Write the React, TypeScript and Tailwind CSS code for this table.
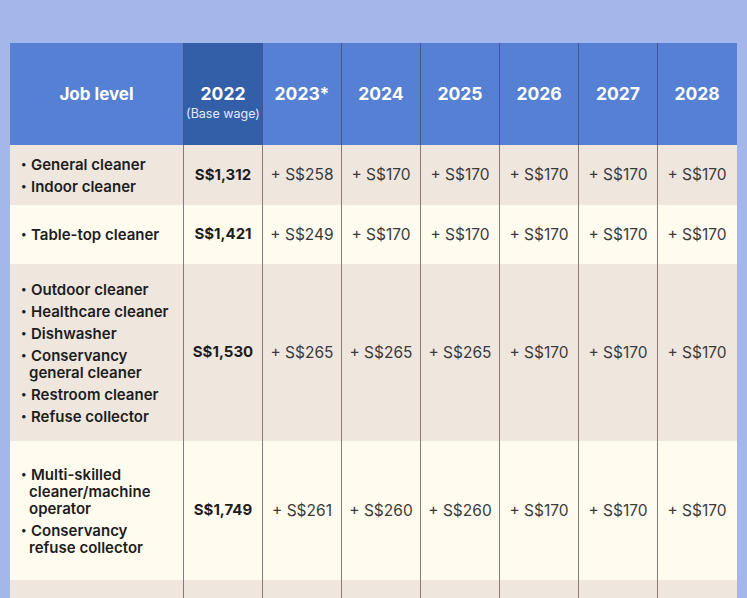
import React from "react";

const years = ["2023*", "2024", "2025", "2026", "2027", "2028"];

type Row = {
  jobs: string[][];
  base: string;
  raises: string[];
  height: string;
  bg: string;
};

const rows: Row[] = [
  {
    jobs: [["General cleaner"], ["Indoor cleaner"]],
    base: "S$1,312",
    raises: ["+ S$258", "+ S$170", "+ S$170", "+ S$170", "+ S$170", "+ S$170"],
    height: "h-[60px]",
    bg: "bg-[#efe6de]",
  },
  {
    jobs: [["Table-top cleaner"]],
    base: "S$1,421",
    raises: ["+ S$249", "+ S$170", "+ S$170", "+ S$170", "+ S$170", "+ S$170"],
    height: "h-[59px]",
    bg: "bg-[#fffbef]",
  },
  {
    jobs: [
      ["Outdoor cleaner"],
      ["Healthcare cleaner"],
      ["Dishwasher"],
      ["Conservancy", "general cleaner"],
      ["Restroom cleaner"],
      ["Refuse collector"],
    ],
    base: "S$1,530",
    raises: ["+ S$265", "+ S$265", "+ S$265", "+ S$170", "+ S$170", "+ S$170"],
    height: "h-[177px]",
    bg: "bg-[#efe6de]",
  },
  {
    jobs: [
      ["Multi-skilled", "cleaner/machine", "operator"],
      ["Conservancy", "refuse collector"],
    ],
    base: "S$1,749",
    raises: ["+ S$261", "+ S$260", "+ S$260", "+ S$170", "+ S$170", "+ S$170"],
    height: "h-[139px]",
    bg: "bg-[#fffbef]",
  },
];

const JobList = ({ jobs }: { jobs: string[][] }) => (
  <div className="flex flex-col gap-[5px] pl-[11px]">
    {jobs.map((lines, i) => (
      <div key={i} className="flex">
        <span className="w-[10px] shrink-0 text-[11px] leading-[17px]">•</span>
        {/* wrapped lines sit 2px left of the first one */}
        <p className="-ml-[2px] indent-[2px] leading-[17px]">
          {lines.map((l, j) => (
            <React.Fragment key={j}>
              {j > 0 && <br />}
              {l}
            </React.Fragment>
          ))}
        </p>
      </div>
    ))}
  </div>
);

export default function App() {
  return (
    <div
      className="h-[598px] w-[747px] overflow-hidden bg-[#a3b7ea] pt-[43px] pl-[10px]"
      style={{ fontFamily: "Inter, 'Noto Sans', sans-serif" }}
    >
      <div className="w-[727px]">
        {/* header */}
        <div className="grid h-[102px] grid-cols-[173px_repeat(7,79px)] bg-[#5680d3] text-white">
          <div className="flex justify-center pt-[39px] text-[17px] font-bold leading-[24px]">
            Job level
          </div>
          <div className="flex flex-col items-center border-l border-[#44568c] bg-[#335fa9] pt-[39px]">
            <span className="text-[17.5px] font-bold leading-[24px]">2022</span>
            <span className="text-[12.5px] leading-[16px] text-[#e4ebfa]">(Base wage)</span>
          </div>
          {years.map((y) => (
            <div
              key={y}
              className="flex justify-center border-l border-[#44568c] pt-[39px] text-[17.5px] font-bold leading-[24px]"
            >
              {y}
            </div>
          ))}
        </div>

        {rows.map((r, i) => (
          <div
            key={i}
            className={`grid grid-cols-[173px_repeat(7,79px)] ${r.height} ${r.bg}`}
          >
            <div className="flex items-center text-[15px] font-semibold text-[#1d1d1f]">
              <JobList jobs={r.jobs} />
            </div>
            <div className="flex items-center justify-center border-l border-[#867b79] text-[15px] font-bold text-[#1d1d1f]">
              {r.base}
            </div>
            {r.raises.map((v, k) => (
              <div
                key={k}
                className="flex items-center justify-center border-l border-[#867b79] text-[15.5px] text-[#3a3a3c]"
              >
                {v}
              </div>
            ))}
          </div>
        ))}

        <div className="grid h-[60px] grid-cols-[173px_repeat(7,79px)] bg-[#efe6de]">
          <div />
          {Array.from({ length: 7 }).map((_, k) => (
            <div key={k} className="border-l border-[#867b79]" />
          ))}
        </div>
      </div>
    </div>
  );
}
